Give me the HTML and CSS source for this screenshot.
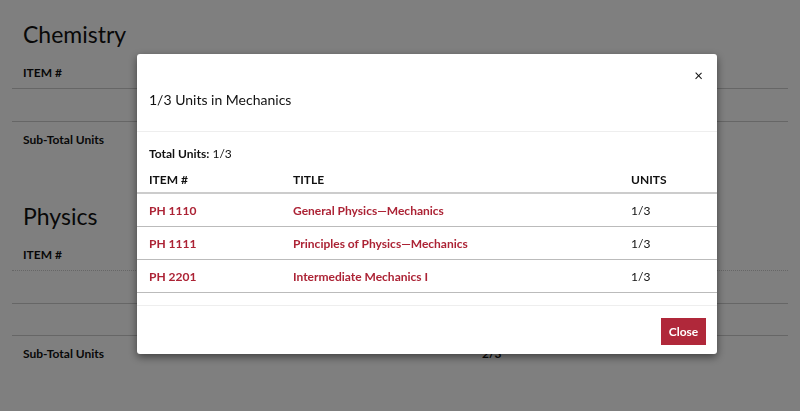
FILE: index.html
```html
<!DOCTYPE html>
<html lang="en">
  <head>
    <meta charset="UTF-8" />
    <meta name="viewport" content="width=device-width, initial-scale=1.0" />
    <title>Units in Mechanics</title>
    <link rel="stylesheet" href="styles.css">
  </head>
  <body>
    <main class="page">
      <section class="subject">
        <h2>Chemistry</h2>
        <div class="row head">ITEM #</div>
        <div class="row empty"></div>
        <div class="row total">Sub-Total Units</div>
      </section>

      <section class="subject">
        <h2>Physics</h2>
        <div class="row head dotted">ITEM #</div>
        <div class="row empty"></div>
        <div class="row empty"></div>
        <div class="row total">Sub-Total Units <span class="sum">2/3</span></div>
      </section>
    </main>

    <div class="overlay">
      <div class="modal">
        <div class="modal-header">
          <div class="close">&times;</div>
          <h4>1/3 Units in Mechanics</h4>
        </div>
        <div class="modal-body">
          <p class="total-units"><b>Total Units:</b> 1/3</p>
          <table>
            <thead>
              <tr>
                <th class="c-item">ITEM #</th>
                <th class="c-title">TITLE</th>
                <th>UNITS</th>
              </tr>
            </thead>
            <tbody>
              <tr>
                <td class="link">PH 1110</td>
                <td class="link">General Physics—Mechanics</td>
                <td>1/3</td>
              </tr>
              <tr>
                <td class="link">PH 1111</td>
                <td class="link">Principles of Physics—Mechanics</td>
                <td>1/3</td>
              </tr>
              <tr>
                <td class="link">PH 2201</td>
                <td class="link">Intermediate Mechanics I</td>
                <td>1/3</td>
              </tr>
            </tbody>
          </table>
        </div>
        <div class="modal-footer">
          <button>Close</button>
        </div>
      </div>
    </div>
  </body>
</html>
```

FILE: styles.css
```css
body {
  margin: 0;
  font-family: Lato, "Liberation Sans", sans-serif;
  color: #111;
  background-color: white;
}

.page {
  padding: 15px 12px 0;
}

.subject h2 {
  margin: 0 0 0 11px;
  font-size: 23px;
  font-weight: normal;
  line-height: 38px;
}

.subject + .subject {
  margin-top: 42px;
}

.row {
  height: 33px;
  border-bottom: 1px solid #ccc;
  font-size: 12px;
  font-weight: bold;
  padding-left: 11px;
  line-height: 33px;
  box-sizing: border-box;
}

.row.head {
  height: 36px;
  line-height: 40px;
}

.row.dotted {
  border-bottom-style: dotted;
}

.row.empty + .row.empty {
  height: 32px;
}

.row.total {
  border-bottom: none;
  line-height: 36px;
}

.sum {
  margin-left: 375px;
}

.overlay {
  position: fixed;
  inset: 0;
  background-color: rgba(0, 0, 0, 0.5);
}

.modal {
  width: 580px;
  margin: 54px 0 0 137px;
  background-color: white;
  border-radius: 3px;
  box-shadow: 0 3px 9px rgba(0, 0, 0, 0.5);
}

.modal-header {
  padding: 14px 12px 21px;
  border-bottom: 1px solid #eee;
}

.close {
  text-align: right;
  font-size: 15px;
  line-height: 14px;
  padding-right: 2px;
}

.modal-header h4 {
  margin: 8px 0 0;
  font-size: 14px;
  font-weight: normal;
  line-height: 20px;
}

.modal-body {
  padding: 15px 0 12px;
}

.total-units {
  margin: 0 12px;
  font-size: 12px;
  line-height: 14px;
}

table {
  width: 100%;
  border-collapse: collapse;
  font-size: 12px;
  margin-top: 5px;
}

th,
td {
  text-align: left;
  padding: 0 12px;
}

th {
  height: 26px;
  border-bottom: 2px solid #ccc;
}

td {
  height: 32px;
  border-bottom: 1px solid #bbb;
}

.c-item {
  width: 120px;
}

.c-title {
  width: 314px;
}

.link {
  color: #ac2335;
  font-weight: bold;
}

.modal-footer {
  border-top: 1px solid #eee;
  padding: 12px 11px 9px;
  text-align: right;
}

button {
  background-color: #b0283a;
  color: white;
  border: none;
  border-radius: 0;
  font-family: Lato, "Liberation Sans", sans-serif;
  font-size: 12px;
  font-weight: bold;
  height: 27px;
  width: 45px;
  padding: 0;
}
```
